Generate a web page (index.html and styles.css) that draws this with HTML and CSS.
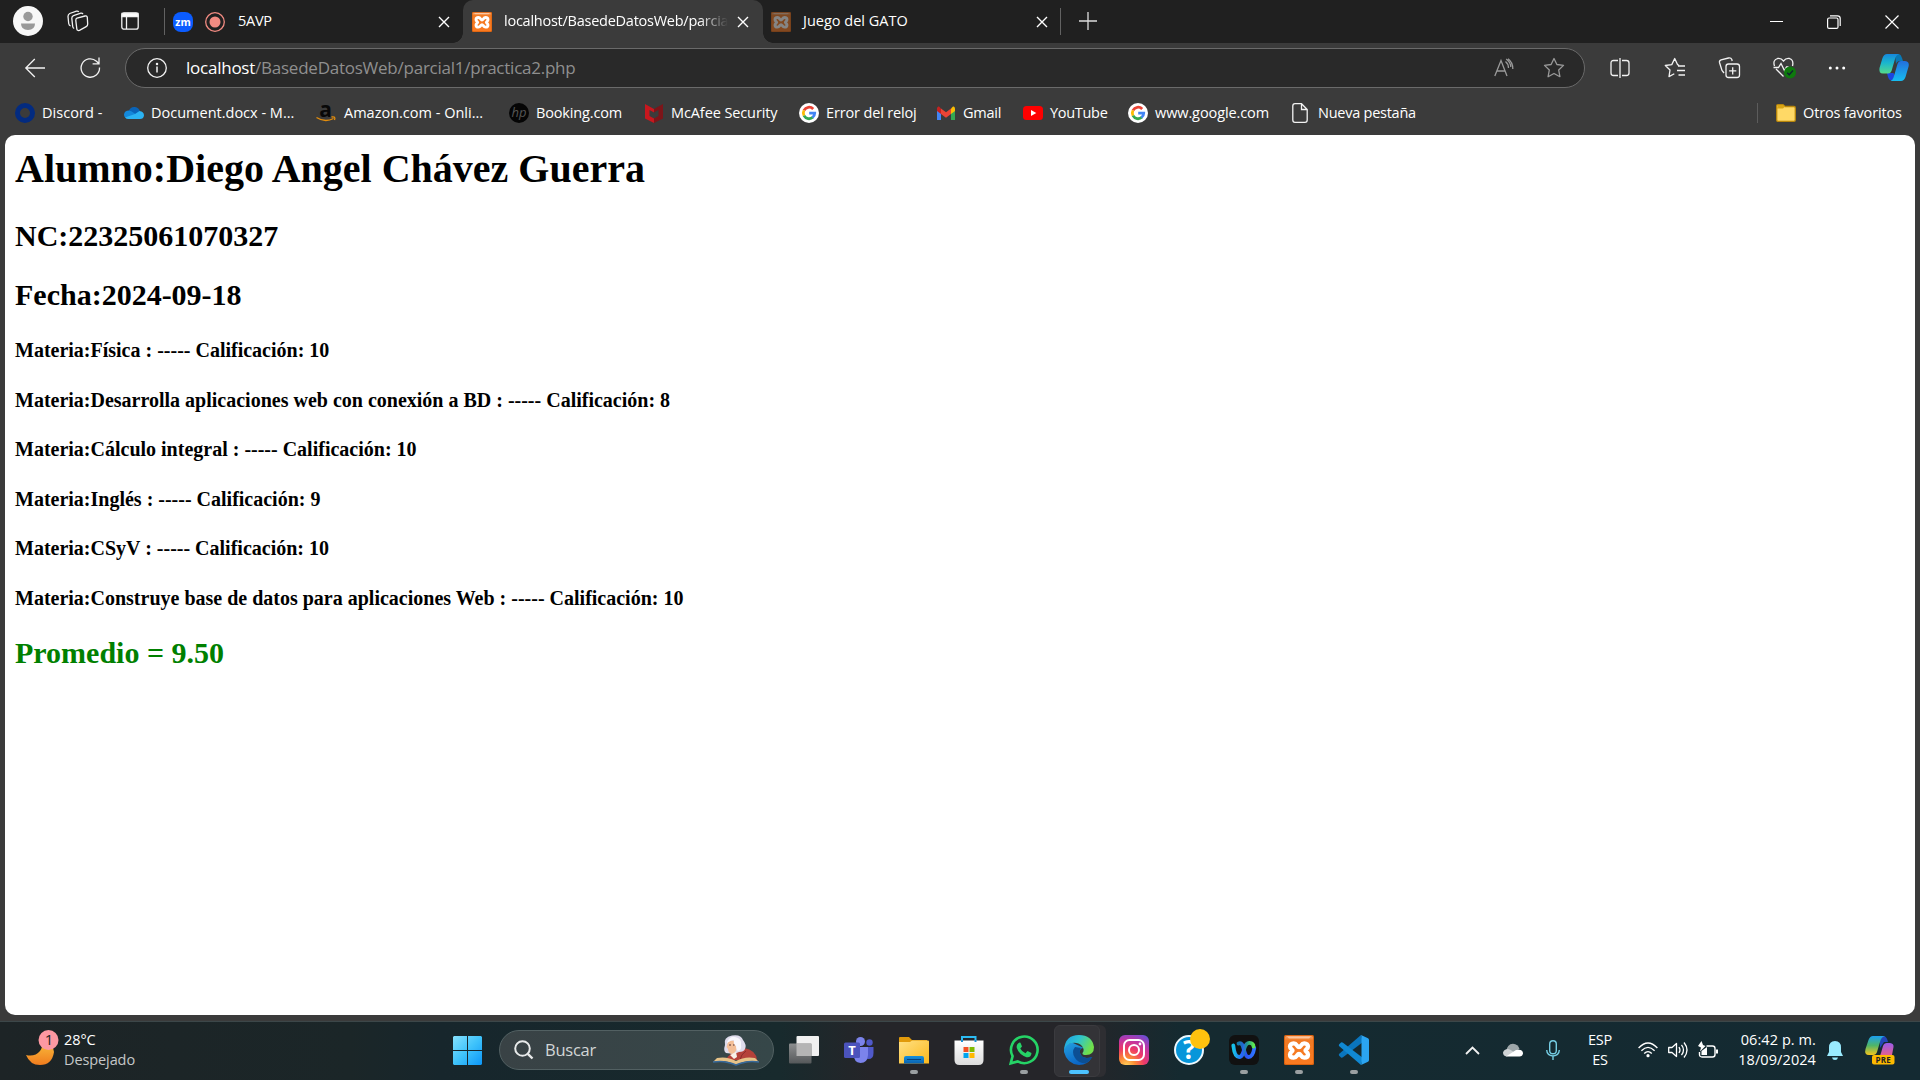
FILE: index.html
```html
<!DOCTYPE html>
<html lang="es">
<head>
<meta charset="utf-8">
<title>localhost/BasedeDatosWeb/parcial1/practica2.php</title>
<link rel="stylesheet" href="styles.css">
</head>
<body>
<svg class="defs" width="0" height="0" aria-hidden="true">
  <defs>
    <linearGradient id="cpA" x1="0" y1="0" x2="0" y2="1"><stop offset="0" stop-color="#1687dc"/><stop offset=".45" stop-color="#1ab6ce"/><stop offset="1" stop-color="#55d98a"/></linearGradient>
    <linearGradient id="cpB" x1="0" y1="0" x2="0" y2="1"><stop offset="0" stop-color="#236fdd"/><stop offset="1" stop-color="#16bdf0"/></linearGradient>
    <linearGradient id="cpC" x1="0" y1="0" x2="0" y2="1"><stop offset="0" stop-color="#1ba0f0"/><stop offset=".5" stop-color="#4fb568"/><stop offset="1" stop-color="#f5c51c"/></linearGradient>
    <linearGradient id="cpD" x1="0" y1="0" x2="0" y2="1"><stop offset="0" stop-color="#9a5bea"/><stop offset="1" stop-color="#f2607c"/></linearGradient>
    <linearGradient id="xg" x1="0" y1="0" x2="0" y2="1"><stop offset="0" stop-color="#f9a367"/><stop offset=".15" stop-color="#f17a24"/><stop offset="1" stop-color="#fb7a20"/></linearGradient>
    <linearGradient id="win" x1="0" y1="0" x2="1" y2="1"><stop offset="0" stop-color="#86e1fd"/><stop offset=".5" stop-color="#3fc3fb"/><stop offset="1" stop-color="#0c96f7"/></linearGradient>
    <linearGradient id="fold" x1="0" y1="0" x2="1" y2="1"><stop offset="0" stop-color="#ffe084"/><stop offset="1" stop-color="#fbb91d"/></linearGradient>
    <linearGradient id="blue" x1="0" y1="0" x2="0" y2="1"><stop offset="0" stop-color="#1590dc"/><stop offset="1" stop-color="#0a62b0"/></linearGradient>
    <linearGradient id="edgeTop" x1="0" y1="0" x2="1" y2=".4"><stop offset="0" stop-color="#1d9fe8"/><stop offset=".5" stop-color="#2ec4d0"/><stop offset="1" stop-color="#70e04b"/></linearGradient>
    <linearGradient id="edgeBody" x1="0" y1="0" x2=".5" y2="1"><stop offset="0" stop-color="#239fe0"/><stop offset="1" stop-color="#0a63c4"/></linearGradient>
    <radialGradient id="ig" cx=".25" cy="1.05" r="1.2"><stop offset="0" stop-color="#ffd860"/><stop offset=".25" stop-color="#fb8b34"/><stop offset=".5" stop-color="#ee3a67"/><stop offset=".75" stop-color="#bf35a5"/><stop offset="1" stop-color="#6a4fd4"/></radialGradient>
    <linearGradient id="wbA" x1="0" y1="0" x2="1" y2="0"><stop offset="0" stop-color="#16c3e8"/><stop offset=".45" stop-color="#2a62fa"/><stop offset=".65" stop-color="#1f8f95"/><stop offset="1" stop-color="#5de850"/></linearGradient>
    <linearGradient id="wbB" x1="0" y1="0" x2="1" y2="0"><stop offset="0" stop-color="#1478a8"/><stop offset=".5" stop-color="#2a55f5"/><stop offset="1" stop-color="#2f74ff"/></linearGradient>
    <linearGradient id="moon" x1="0" y1="0" x2="0" y2="1"><stop offset="0" stop-color="#f9bd3c"/><stop offset="1" stop-color="#f07c1e"/></linearGradient>
    <linearGradient id="store" x1="0" y1="0" x2="0" y2="1"><stop offset="0" stop-color="#fff"/><stop offset="1" stop-color="#dcdcdc"/></linearGradient>
    <linearGradient id="grey" x1="0" y1="0" x2="0" y2="1"><stop offset="0" stop-color="#8d8f90"/><stop offset="1" stop-color="#55585a"/></linearGradient>
    <symbol id="xampp" viewBox="0 0 30 30"><rect width="30" height="30" rx="1.500" fill="#d9620f"/><rect x="1" y="1" width="28" height="28" rx="1.500" fill="url(#xg)"/><path d="M3 1.500H27L25 3.500H5Z" fill="#fff" opacity=".45"/><path d="M15 12.200C13 12.200 13 8.300 9.700 8.300C7.300 8.300 6 9.800 6 11.600C6 14 8.500 14.500 8.500 15.500C8.500 16.500 6 17 6 19.400C6 21.500 7.500 22.700 9.700 22.700C13 22.700 13 19 15 19C17 19 17 22.700 20.300 22.700C22.500 22.700 24 21.500 24 19.400C24 17 21.500 16.500 21.500 15.500C21.500 14.500 24 14 24 11.600C24 9.800 22.700 8.300 20.300 8.300C17 8.300 17 12.200 15 12.200Z" fill="none" stroke="#fff" stroke-width="4.300" stroke-linejoin="round"/></symbol>
    <symbol id="x" viewBox="0 0 12 12"><path d="M1 1L11 11M11 1L1 11" stroke="#fff" stroke-width="1.400" fill="none"/></symbol>
    <symbol id="google" viewBox="0 0 20 20"><circle cx="10" cy="10" r="10" fill="#fff"/><g fill="none" stroke-width="2.800"><path d="M5 7.300A5.700 5.700 0 0 1 14.200 6" stroke="#ea4335"/><path d="M5 12.700A5.700 5.700 0 0 1 5 7.300" stroke="#fbbc05"/><path d="M13.800 14.300A5.700 5.700 0 0 1 5 12.700" stroke="#34a853"/><path d="M10.200 10.200H15.700A5.700 5.700 0 0 1 13.500 14.500" stroke="#4285f4"/></g></symbol>
  </defs>
</svg>

<header class="tabs">
  <div class="tabs-tools">
    <svg width="30" height="30" viewBox="0 0 30 30"><circle cx="15" cy="15" r="15" fill="#f7f7f7"/><circle cx="15" cy="10.500" r="4.700" fill="#999"/><path d="M8 17.500H22Q22 24 15 24Q8 24 8 17.500Z" fill="#999"/></svg>
    <svg class="line workspaces" width="22" height="22" viewBox="0 0 22 22"><path d="M10 8.200L18 6Q20 5.500 20.300 7.400L20.700 14Q20.700 15.800 19.200 16.600L12.500 20.400Q10.200 21 9.800 18.800L8.800 10.500Q8.700 8.700 10 8.200Z"/><path d="M7.200 18.500Q5.900 18 5.700 16.500L4.800 8.200Q4.800 6.300 6.500 5.600L13.800 3.200Q15.200 2.900 16 4"/><path d="M3.600 16Q2 15.400 1.700 13.500L1 6.500Q1 4.300 2.700 3.500L9.500 1.200Q11 .8 11.800 1.800"/></svg>
    <svg class="line pane" width="18" height="18" viewBox="0 0 18 18"><rect x=".8" y=".8" width="16.400" height="16.400" rx="2.300"/><path d="M1 1.500H17V4.500H1Z" fill="#fff"/><path d="M5.500 5V17"/></svg>
  </div>
  <div class="tab tab-first">
    <svg width="20" height="20" viewBox="0 0 20 20"><rect width="20" height="20" rx="8" fill="#0b5cff"/><text x="10" y="13.500" text-anchor="middle" class="zm">zm</text></svg>
    <svg class="rec" width="20" height="20" viewBox="0 0 20 20"><circle cx="10" cy="10" r="9.300" fill="none" stroke="#f28b82" stroke-width="1.300"/><circle cx="10" cy="10" r="5.500" fill="#f28b82"/></svg>
    <span class="tab-title">5AVP</span>
    <svg class="close" width="12" height="12"><use href="#x"/></svg>
  </div>
  <div class="tab tab-active">
    <svg width="20" height="20"><use href="#xampp"/></svg>
    <span class="tab-title fade">localhost/BasedeDatosWeb/parcia</span>
    <svg class="close" width="12" height="12"><use href="#x"/></svg>
  </div>
  <div class="tab tab-last">
    <svg class="asleep" width="20" height="20"><use href="#xampp"/></svg>
    <span class="tab-title">Juego del GATO</span>
    <svg class="close" width="12" height="12"><use href="#x"/></svg>
  </div>
  <svg class="new-tab" width="18" height="18" viewBox="0 0 18 18"><path d="M9 0V18M0 9H18" stroke="#ddd" stroke-width="1.300"/></svg>
  <div class="window-buttons">
    <svg width="13" height="13" viewBox="0 0 13 13"><path d="M0 6.500H13" stroke="#fff"/></svg>
    <svg width="14" height="14" viewBox="0 0 14 14" fill="none" stroke="#fff" stroke-width="1.200"><rect x=".6" y="3" width="10.400" height="10.400" rx="1.500"/><path d="M3 .8H10.500Q13.200 .8 13.200 3.500V11"/></svg>
    <svg width="14" height="14" viewBox="0 0 14 14"><path d="M.5 .5L13.500 13.500M13.500 .5L.5 13.500" stroke="#fff" stroke-width="1.200"/></svg>
  </div>
</header>

<nav class="toolbar">
  <svg class="line back" width="20" height="20" viewBox="0 0 20 20"><path d="M20 10H1M9.800 1L.8 10L9.800 19"/></svg>
  <svg class="line reload" width="21" height="21" viewBox="0 0 21 21"><path d="M19.500 10.500A9.200 9.200 0 1 1 16.500 4.200L18.800 6.500M19 .5V6.800H12.600"/></svg>
  <div class="address">
    <svg class="line info" width="20" height="20" viewBox="0 0 20 20"><circle cx="10" cy="10" r="9.300"/><path d="M10 8.500V14.500" stroke-width="1.500"/><circle cx="10" cy="5.900" r=".6" fill="#fff"/></svg>
    <span class="url"><b>localhost</b>/BasedeDatosWeb/parcial1/practica2.php</span>
    <svg class="line dim" width="20" height="20" viewBox="0 0 20 20"><path d="M.8 18L7 2.500L13 18M2.800 13H11M11.500 3.500Q14.500 6 14.500 10M14 .8Q19 4.500 18.800 11M12.200 1Q16.800 4.500 16.800 9"/></svg>
    <svg class="line dim" width="22" height="22" viewBox="0 0 22 22"><path d="M11 1.500L13.900 7.500L20.500 8.400L15.700 13L16.900 19.700L11 16.500L5.100 19.700L6.300 13L1.500 8.400L8.100 7.500Z" stroke-linejoin="round"/></svg>
  </div>
  <div class="toolbar-icons">
    <svg class="line" width="20" height="20" viewBox="0 0 20 20"><path d="M8 2.500H3.500Q1 2.500 1 5V15Q1 17.500 3.500 17.500H8M12 2.500H16.500Q19 2.500 19 5V15Q19 17.500 16.500 17.500H12M10 0V20"/></svg>
    <svg class="line" width="21" height="21" viewBox="0 0 21 21"><path d="M14.500 8.300L13 7.600L10.200 1.500L7.300 7.600L.8 8.500L5.500 13L4.500 19.600L9.800 16.700M13.500 9H20.500M12.500 13.500H20.500M14 18H20.500" stroke-linejoin="round"/></svg>
    <svg class="line" width="22" height="22" viewBox="0 0 22 22"><path d="M5.500 16L3.500 13.500L1 5.500Q.6 3.500 2.600 2.800L10 1Q12.500 .5 13.300 2.500L13.700 4"/><rect x="7.500" y="7" width="13.500" height="13.500" rx="2.500"/><path d="M14.200 10.200V17.400M10.600 13.800H17.800"/></svg>
    <svg class="line" width="24" height="22" viewBox="0 0 24 22"><path d="M2 9Q0 3 5 1.500Q8.500 .8 11 4Q13.500 .8 17 1.500Q21.500 3 20 9M3.500 12L11 19.500M1 10.500H6L8.500 6.500L12 13.500L14 10H16"/><circle cx="17.500" cy="15.500" r="6" fill="#0e7a0d" stroke="none"/><path d="M14.700 15.700L16.700 17.700L20.500 13.500" stroke="#123" stroke-width="1.400"/></svg>
    <svg width="18" height="4" viewBox="0 0 18 4" fill="#fff"><circle cx="2.300" cy="2" r="1.500"/><circle cx="9" cy="2" r="1.500"/><circle cx="15.700" cy="2" r="1.500"/></svg>
    <svg width="30" height="27" viewBox="0 0 30 27"><path d="M16 0H20Q22 .5 23 4L24 7H21Q18 7 17 10Z" fill="#0878b5"/><path d="M8 19H14.500L16 22L13 26.500Q10 26.500 9 23Z" fill="#1b46df"/><path d="M8 0H20Q17 1 16 5L12.500 17Q11.500 19.500 9 19.500H4Q-.5 19.500 .5 14L3.500 4Q5 0 8 0Z" fill="url(#cpA)"/><path d="M22 27H11.500Q14 26 15 22L18.500 10Q19.500 7 22 7H26Q30.500 7.500 29.700 12L26.500 23Q25 27 22 27Z" fill="url(#cpB)"/></svg>
  </div>
</nav>

<nav class="favorites">
  <a class="fav f1"><svg width="20" height="20" viewBox="0 0 20 20"><circle cx="10" cy="10" r="7.500" fill="none" stroke="#032b80" stroke-width="5"/></svg><span>Discord -</span></a>
  <a class="fav f2"><svg width="20" height="20" viewBox="0 0 20 20"><path d="M4.500 9Q6 3.500 11 4Q15 4.500 16 8.500L10 13Z" fill="#0a64b8"/><path d="M4.500 15.500Q0 15.500 0 11.500Q.5 7.500 5 7.500Q7 7.500 10 10L17 15Z" fill="#1488da"/><path d="M11 11L15.500 8Q20 8.500 20 12.500Q19.500 16 16 16H4.500Q2.500 16 1 14.500Z" fill="#2bb3f3"/></svg><span>Document.docx - M...</span></a>
  <a class="fav f3"><svg width="20" height="20" viewBox="0 0 20 20"><text x="9.500" y="13.500" text-anchor="middle" class="amazon">a</text><path d="M.5 14.500Q9 20 17.500 15.500M15.500 14Q20 13 18.500 17" fill="none" stroke="#e58e0c" stroke-width="1.300"/></svg><span>Amazon.com - Onli...</span></a>
  <a class="fav f4"><svg width="20" height="20" viewBox="0 0 20 20"><circle cx="10" cy="10" r="10" fill="#050505"/><text x="10" y="14" text-anchor="middle" class="hp">hp</text></svg><span>Booking.com</span></a>
  <a class="fav f5"><svg width="18" height="20" viewBox="0 0 18 20"><path d="M0 1L9 6V9.500L4.500 7V13L9 15.500V20L0 15.500Z" fill="#c8171e"/><path d="M18 1L9 6V9.500L13.500 7V13L9 15.500V20L18 15.500Z" fill="#7d1519"/></svg><span>McAfee Security</span></a>
  <a class="fav f6"><svg width="20" height="20"><use href="#google"/></svg><span>Error del reloj</span></a>
  <a class="fav f7"><svg width="18" height="14" viewBox="0 0 18 14"><path d="M0 2V14H4V6Z" fill="#4285f4"/><path d="M18 2V14H14V6Z" fill="#34a853"/><path d="M14 2.500L16 .6Q18 0 18 3V5L14 8Z" fill="#fbbc04"/><path d="M4 2.500L2 .6Q0 0 0 3V5L4 8Z" fill="#c5221f"/><path d="M4 2.500L9 6.300L14 2.500V8L9 11.700L4 8Z" fill="#ea4335"/></svg><span>Gmail</span></a>
  <a class="fav f8"><svg width="20" height="14" viewBox="0 0 20 14"><rect width="20" height="14" rx="3.500" fill="#f00"/><path d="M8 4L13.300 7L8 10Z" fill="#fff"/></svg><span>YouTube</span></a>
  <a class="fav f9"><svg width="20" height="20"><use href="#google"/></svg><span>www.google.com</span></a>
  <a class="fav f10"><svg class="line" width="16" height="20" viewBox="0 0 16 20"><path d="M9.500 .7H3Q.8 .7 .8 3V17Q.8 19.300 3 19.300H13Q15.200 19.300 15.200 17V6.500ZM9.500 .7V6.500H15"/></svg><span>Nueva pestaña</span></a>
  <a class="fav others"><svg width="20" height="18" viewBox="0 0 20 18"><path d="M.7 2Q.7 .7 2 .7H7L9 2.500H18Q19.300 2.500 19.300 4V16Q19.300 17.300 18 17.300H2Q.7 17.300 .7 16Z" fill="#ffd966" stroke="#b8860b" stroke-width="1.300"/><path d="M1 4.500H7L9 2.500L7 .9H2Z" fill="#d9a514"/></svg><span>Otros favoritos</span></a>
</nav>

<main class="page">
  <h1>Alumno:Diego Angel Chávez Guerra</h1>
  <h2>NC:22325061070327</h2>
  <h2>Fecha:2024-09-18</h2>
  <h4>Materia:Física : ----- Calificación: 10</h4>
  <h4>Materia:Desarrolla aplicaciones web con conexión a BD : ----- Calificación: 8</h4>
  <h4>Materia:Cálculo integral : ----- Calificación: 10</h4>
  <h4>Materia:Inglés : ----- Calificación: 9</h4>
  <h4>Materia:CSyV : ----- Calificación: 10</h4>
  <h4>Materia:Construye base de datos para aplicaciones Web : ----- Calificación: 10</h4>
  <h2 class="average">Promedio = 9.50</h2>
</main>

<footer class="taskbar">
  <div class="weather">
    <svg width="34" height="38" viewBox="0 0 34 38"><path d="M0 25Q9 27 14 21Q17 17 16 12Q28 14 28 22Q26 35 14 35Q4 35 0 25Z" fill="url(#moon)"/><circle cx="22.500" cy="10" r="10" fill="#fd98a2"/><text x="23" y="15" text-anchor="middle" class="count">1</text></svg>
    <div class="weather-text"><span>28°C</span><span class="muted">Despejado</span></div>
  </div>
  <svg class="start" width="29" height="29" viewBox="0 0 29 29"><path d="M1 0H14V14H0V1ZM15 0H28L29 1V14H15ZM0 15H14V29H1L0 28ZM15 15H29V28L28 29H15Z" fill="url(#win)"/></svg>
  <div class="search">
    <svg width="20" height="20" viewBox="0 0 20 20"><circle cx="8.500" cy="8.500" r="7.300" fill="none" stroke="#e8eaea" stroke-width="2"/><path d="M13.800 13.800L18.500 18.500" stroke="#e8eaea" stroke-width="2.400"/></svg>
    <span>Buscar</span>
    <svg class="writer" width="46" height="32" viewBox="0 0 46 32"><path d="M13 26Q16 19 23 18L31 14Q43 16 44 26Z" fill="#b5413a"/><path d="M27 26Q28 20 33 17" stroke="#8b2d2c" fill="none"/><path d="M13 19Q10 17 12 11Q10 3 19 1.500Q28 0 30 6Q34 11 32 15Q31 18 26 18L21 20Z" fill="#dfdcec"/><path d="M15 8Q19 5 23 8L24 14Q22 20 19 20Q15 19 15 15L13.500 13Z" fill="#f3bf98"/><path d="M14 8Q17 2 22 3Q29 4 28 11Q29 16 25 17Q23 16 23 12Q20 10 21 6Q18 6 14 9Z" fill="#f9f8fd"/><path d="M16 11H18M20 11H21.500" stroke="#533" stroke-width="1.200"/><path d="M17 21L23 18L24 23L21 25Z" fill="#f7f0e9"/><path d="M0 28Q12 25 23 31Q34 25 46 28L42 24Q32 22 23 27Q14 22 4 24Z" fill="#e7c388"/><path d="M0 28Q12 26 23 31Q34 26 46 28" fill="none" stroke="#386a9b" stroke-width="1.400"/></svg>
  </div>
  <div class="apps">
    <div class="app"><svg width="30" height="30" viewBox="0 0 30 30"><rect x="7.500" y="1" width="22.500" height="20" rx="1" fill="#f1f1f1"/><rect y="8.500" width="22.500" height="20" rx="1" fill="url(#grey)"/><path d="M7.500 8.500H22.500V21H7.500Z" fill="#b5b5b5"/></svg></div>
    <div class="app"><svg width="30" height="30" viewBox="0 0 30 30"><circle cx="25.500" cy="7.500" r="3.200" fill="#5059c9"/><path d="M20 12H29.500V18Q29.500 24 24.500 24Q20 24 20 19Z" fill="#5059c9"/><circle cx="16.500" cy="6.500" r="4.500" fill="#7b83eb"/><path d="M10 12H24V20Q23.500 28 16.500 28Q9.500 27 10 20Z" fill="#7b83eb"/><rect y="7.500" width="16" height="15.500" rx="1.500" fill="#4b53bc"/><text x="7.800" y="20" text-anchor="middle" class="teams">T</text></svg></div>
    <div class="app running"><svg width="30" height="30" viewBox="0 0 30 30"><path d="M0 3Q0 2 1 2H10L13 5H28V14H0Z" fill="#e19a0b"/><path d="M0 7H11L13 5.500H29Q30 5.500 30 6.500V28.500H0Z" fill="url(#fold)"/><path d="M5 28.500V23Q5 21 7 21H23Q25 21 25 23V28.500Z" fill="url(#blue)"/><path d="M8 24.500H22" stroke="#06427d"/></svg></div>
    <div class="app"><svg width="30" height="30" viewBox="0 0 30 30"><path d="M8 7V2H21.500V7" fill="none" stroke="#2cbcf3" stroke-width="2"/><path d="M.5 5.500H29.500V25Q29.500 30 24.500 30H5.500Q.5 30 .5 25Z" fill="url(#store)"/><path d="M8 7V5M21.500 7V5" stroke="#1a8fd0" stroke-width="2"/><path d="M9.500 12H14.500V17H9.500Z" fill="#f25022"/><path d="M15.500 12H20.500V17H15.500Z" fill="#7fba00"/><path d="M9.500 18H14.500V23H9.500Z" fill="#00a4ef"/><path d="M15.500 18H20.500V23H15.500Z" fill="#ffb900"/></svg></div>
    <div class="app running"><svg width="30" height="30" viewBox="0 0 30 30"><path d="M1.700 28.300L3.600 21.200A13.300 13.300 0 1 1 8.700 26.400Z" fill="none" stroke="#25d366" stroke-width="2.600"/><path d="M10.500 7.500Q7 9 7.800 13Q10 19.500 17.500 22.200Q22 23 22.500 18L18.500 16L16.500 18.200Q13 17 11.300 13.500L13 11.500L11.500 7.800Z" fill="#25d366"/></svg></div>
    <div class="app current"><svg width="30" height="30" viewBox="0 0 30 30"><path d="M0 15Q1 7 9 8L20 13Q15 13 16 18Q18 25 28 22Q24 30 15 30Q3 29 0 17Z" fill="url(#edgeBody)"/><path d="M11 12Q7 17 11 23Q15 29 22 28Q26 26 28.500 22Q18 25 16 18Q15 15 17 13Z" fill="#0c4f94"/><path d="M0 15Q1 0 15 0Q28 0 30 12Q30 20 22 20Q18 20 18.500 18Q21 15 18 11Q14 7 8 8Q2 9 0 15Z" fill="url(#edgeTop)"/></svg></div>
    <div class="app"><svg width="30" height="30" viewBox="0 0 30 30"><rect width="30" height="30" rx="6" fill="url(#ig)"/><g fill="none" stroke="#fff" stroke-width="2"><rect x="5" y="5" width="20" height="20" rx="5.500"/><circle cx="15" cy="15" r="5"/></g><circle cx="21" cy="9" r="1.400" fill="#fff"/></svg></div>
    <div class="app help"><svg width="30" height="30" viewBox="0 0 30 30"><circle cx="15" cy="15" r="14" fill="#0796da" stroke="#eef8fd" stroke-width="2"/><text x="15" y="24" text-anchor="middle" class="question">?</text></svg></div>
    <div class="app running"><svg width="30" height="30" viewBox="0 0 30 30"><rect width="30" height="30" rx="6" fill="#111"/><g fill="none" stroke-width="3.800" stroke-linecap="round"><path d="M9.500 8.500C13.500 7 14 12 15 15C16.500 21 18 22 19.500 22C22.500 22 24.500 18 25.300 13" stroke="url(#wbB)"/><path d="M4.300 10.500C5 17 7 22 10.200 22C13.500 22 14.500 17 15.500 13C17 8 19 7.700 20.500 7.800C23 8 24.500 9.500 24.500 11.500" stroke="url(#wbA)"/></g></svg></div>
    <div class="app running"><svg width="30" height="30"><use href="#xampp"/></svg></div>
    <div class="app running"><svg width="30" height="30" viewBox="0 0 30 30"><path d="M22 0L0 19Q-.5 20 .2 20.800L2 22.500Q3 23 4 22.300L24 7Z" fill="#0a75bd"/><path d="M22 30L0 11Q-.5 10 .2 9.200L2 7.500Q3 7 4 7.700L24 23Z" fill="#1088d2"/><path d="M22 0L29 3.300Q30 4 30 5V25Q30 26 29 26.700L22 30Q22.500 29.500 22.500 28V2Q22.500 .5 22 0Z" fill="#2ba5f2"/></svg></div>
  </div>
  <div class="tray">
    <svg class="line chevron" width="15" height="9" viewBox="0 0 15 9"><path d="M1 8L7.500 1.500L14 8" stroke-width="1.800"/></svg>
    <svg class="cloud" width="20" height="14" viewBox="0 0 20 14"><path d="M3 9Q4 1 10 .8Q15 1 16.500 6L10 10Z" fill="#9da6a9"/><path d="M3.500 13.500Q0 13 0 9.500Q1 6 5 6Q7 6 10 8.500L12 10Z" fill="#cfd3d5"/><path d="M3 13.500L13 7Q20 5.500 20 10.500Q19.500 13.500 16.500 13.500Z" fill="#fff"/></svg>
    <svg class="mic" width="14" height="20" viewBox="0 0 14 20" fill="none" stroke="#75cde3" stroke-width="1.400"><rect x="3.700" y=".7" width="6.600" height="13" rx="3.300"/><path d="M.7 10Q1 15.500 7 16Q13 15.500 13.300 10M7 16V20"/></svg>
    <div class="lang"><span>ESP</span><span>ES</span></div>
    <svg class="wifi" width="20" height="16" viewBox="0 0 20 16" fill="none" stroke="#fff" stroke-width="1.400"><path d="M.6 6Q10-4 19.400 6M3.400 8.800Q10 2 16.600 8.800M6.200 11.500Q10 7.700 13.800 11.500"/><circle cx="10" cy="13.700" r="1.600" fill="#fff" stroke="none"/></svg>
    <svg class="volume" width="20" height="18" viewBox="0 0 20 18" fill="none" stroke="#fff" stroke-width="1.300"><path d="M.7 6.500H4L8.500 2.500V15.500L4 11.500H.7ZM11 6Q13 9 11 12M13.500 3.800Q17.500 9 13.500 14.200M16 1.500Q22 9 16 16.500" stroke-linejoin="round"/></svg>
    <svg class="battery" width="20" height="18" viewBox="0 0 20 18"><path d="M8.500 5H14.500Q17 5 17 7.500V13.500Q17 16 14.500 16H4Q1.500 16 1.500 13.500V11" fill="none" stroke="#fff" stroke-width="1.400"/><path d="M18 8.500H20V12.500H18Z" fill="#fff"/><path d="M3.500 10L9 6V14H3.500Z" fill="#fff"/><path d="M3.500 0L5 4L7.500 5L2 10.500L3 6.500L0 5Z" fill="#fff"/></svg>
    <div class="clock"><span>06:42 p. m.</span><span>18/09/2024</span></div>
    <svg class="bell" width="16" height="19" viewBox="0 0 16 19" fill="#99ebff"><path d="M8 0Q14 0 14 6.500V11L16 15H0L2 11V6.500Q2 0 8 0ZM5 16.500H11Q10.500 19 8 19Q5.500 19 5 16.500Z"/></svg>
    <svg class="copilot" width="30" height="29" viewBox="0 0 30 29"><path d="M15 0H19Q22 1 23 6H19L15 12Z" fill="#2346b8"/><path d="M8 0H20Q16 1 15 6L12 16Q11 19 8 19H4Q-1 19 .5 13L3.500 4Q5 0 8 0Z" fill="url(#cpC)"/><path d="M20 22H12Q15 21 16 17L18 10Q19 7 22 7H25Q29 7.500 28.500 11L27 19Z" fill="url(#cpD)"/><rect x="7" y="19" width="22.500" height="9.500" rx="2" fill="#fdb900"/><text x="18.300" y="26.700" text-anchor="middle" class="pre">PRE</text></svg>
  </div>
</footer>
</body>
</html>
```
FILE: styles.css
```css
* { box-sizing: border-box; }
body {
  margin: 0;
  width: 1920px;
  height: 1080px;
  overflow: hidden;
  display: flex;
  flex-direction: column;
  background: #3b3b3b;
  color: #fff;
  font: 14.5px/20px "Open Sans", "Noto Sans", sans-serif;
  letter-spacing: -.25px;
}
svg { display: block; flex: none; overflow: visible; }
.defs { position: absolute; }
span { white-space: nowrap; }
.line { fill: none; stroke: #f2f2f2; stroke-width: 1.3; }
.dim { stroke: #9a9a9a; }

/* Tab strip */
.tabs { height: 43px; flex: none; display: flex; background: #202020; }
.tabs-tools { width: 164px; display: flex; align-items: center; padding: 0 0 1px 13px; }
.workspaces { margin-left: 24px; }
.pane { margin-left: 32px; }
.tab { display: flex; align-items: center; padding-top: 1px; }
.tab .close { margin-left: auto; }
.tab-title { margin-top: -2px; }
.tab-first {
  width: 299px;
  padding: 1px 13px 0 8px;
  border-left: 1px solid;
  border-image: linear-gradient(transparent 9px, #626262 9px 34px, transparent 34px) 1;
}
.rec { margin: 0 13px 0 12px; }
.tab-active { position: relative; width: 300px; background: #3b3b3b; border-radius: 10px 10px 0 0; padding: 1px 14px 0 9px; }
.tab-active::before, .tab-active::after { content: ""; position: absolute; bottom: 0; width: 10px; height: 10px; }
.tab-active::before { left: -10px; background: radial-gradient(circle at 0 0, #202020 9.5px, #3b3b3b 10px); }
.tab-active::after { right: -10px; background: radial-gradient(circle at 100% 0, #202020 9.5px, #3b3b3b 10px); }
.fade { width: 224px; -webkit-mask-image: linear-gradient(90deg, #000 195px, transparent 224px); mask-image: linear-gradient(90deg, #000 195px, transparent 224px); }
.tab-active .tab-title, .tab-last .tab-title { margin-left: 12px; }
.tab-last {
  width: 298px;
  padding: 1px 12px 0 8px;
  letter-spacing: 0;
  border-right: 1px solid;
  border-image: linear-gradient(transparent 9px, #626262 9px 34px, transparent 34px) 1;
}
.asleep { opacity: .45; }
.new-tab { margin: 12px 0 0 18px; }
.window-buttons { margin-left: auto; display: flex; align-items: center; gap: 44px; padding-right: 21px; }
.zm { font: bold 10.5px "Open Sans", sans-serif; fill: #fff; letter-spacing: 0; }

/* Address row */
.toolbar { height: 49px; flex: none; display: flex; align-items: center; padding-left: 25px; }
.reload { margin-left: 35px; }
.address {
  width: 1460px;
  height: 40px;
  margin: 1px 0 0 24px;
  display: flex;
  align-items: center;
  gap: 29px;
  padding: 0 19px 0 21px;
  background: #292929;
  border: 1px solid #6a6a6a;
  border-radius: 20px;
}
.url { margin: -1px auto 0 -10px; font-size: 17px; color: #8f8f8f; letter-spacing: -.24px; }
.url b { color: #fff; font-weight: normal; }
.toolbar-icons { flex: 1; display: flex; align-items: center; justify-content: space-between; padding: 0 11px 0 25px; }
.toolbar-icons svg:nth-child(n+2):nth-child(-n+4) { transform: translateX(1.5px); }

/* Favorites row */
.favorites { height: 43px; flex: none; display: flex; align-items: center; padding: 0 18px 2px 15px; }
.fav { display: flex; align-items: center; gap: 8px; }
.f1 { width: 109px; gap: 7px; letter-spacing: .05px; }
.f2 { width: 192px; gap: 7px; letter-spacing: 0; }
.f3 { width: 193px; letter-spacing: 0; }
.f4 { width: 136px; gap: 7px; letter-spacing: -.15px; }
.f5 { width: 154px; letter-spacing: -.1px; }
.f6 { width: 138px; gap: 7px; letter-spacing: -.15px; }
.f7 { width: 86px; }
.f8 { width: 105px; gap: 7px; letter-spacing: -.3px; }
.f9 { width: 164px; gap: 7px; letter-spacing: -.1px; }
.f10 { gap: 10px; letter-spacing: -.25px; }
.others { margin-left: auto; width: 145px; padding-left: 18px; gap: 7px; letter-spacing: -.15px; border-left: 1px solid #5c5c5c; }
.amazon { font: bold 21px "Open Sans", sans-serif; fill: #080808; letter-spacing: 0; }
.hp { font: italic 13px "Open Sans", sans-serif; fill: #555; letter-spacing: 0; }

/* Web page */
.page { height: 880px; margin: 0 5px; padding: 10px; flex: none; background: #fff; color: #000; border-radius: 10px; font-family: "Liberation Serif", "Times New Roman", serif; line-height: normal; letter-spacing: 0; }
.page h1 { font-size: 40px; margin: 0 0 26.8px; }
.page h2 { font-size: 30px; margin: 24.9px 0; }
.page h4 { font-size: 20px; margin: 26.6px 0; }
.page h2 + h4 { margin-top: 27.4px; }
.page h4:last-of-type { margin-bottom: 25.8px; }
.page .average { color: #008000; }

/* Taskbar */
.taskbar {
  height: 59px;
  margin-top: 6px;
  flex: none;
  display: flex;
  align-items: center;
  padding-bottom: 2px;
  border-top: 1px solid #3c4749;
  background: linear-gradient(90deg, #1d2426 0, #1b2628 350px, #17262c 440px, #182a2d 780px, #252529 870px, #252529 1080px, #152a30 1180px, #142a32 100%);
}
.weather { width: 453px; display: flex; padding: 0 0 1px 26px; }
.weather-text { display: flex; flex-direction: column; margin-left: 4px; letter-spacing: -.1px; }
.muted { color: #c4c7c8; }
.count { font: 15px "Open Sans", sans-serif; fill: #222; }
.search {
  width: 275px;
  height: 40px;
  margin-left: 17px;
  display: flex;
  align-items: center;
  padding: 0 14px 0 14px;
  border: 1px solid #526062;
  border-radius: 20px;
  background: linear-gradient(90deg, #394245, #364749);
}
.search span { margin-left: 11px; font-size: 16.5px; color: #d2d6d6; }
.writer { margin-left: auto; }
.apps { display: flex; margin-left: 2px; }
.app { position: relative; width: 55px; height: 50px; display: flex; align-items: center; justify-content: center; }
.app svg { position: relative; }
.running::after, .current::after { content: ""; position: absolute; left: 24px; bottom: 1px; width: 8px; height: 4px; border-radius: 2px; background: #9a9fa1; }
.current::after { left: 18px; width: 20px; background: #4cc2ff; }
.current::before { content: ""; position: absolute; left: 3px; top: 0; width: 44px; height: 50px; border-radius: 6px; background: #333337; border: 1px solid #3b3b3f; box-shadow: 6px 0 0 #2e2e32; }
.help::after { content: ""; position: absolute; left: 29px; top: 4px; width: 20px; height: 20px; border-radius: 50%; background: #ffc20e; }
.teams { font: bold 13px "Open Sans", sans-serif; fill: #fff; }
.question { font: bold 26px "Open Sans", sans-serif; fill: #fff; }
.pre { font: bold 8px "Open Sans", sans-serif; fill: #222; letter-spacing: .3px; }
.tray { flex: 1; display: flex; align-items: center; padding-right: 25px; }
.chevron { margin-left: 84px; }
.cloud { margin-left: 23px; }
.mic { margin-left: 23px; }
.lang { width: 40px; margin-left: 20px; display: flex; flex-direction: column; align-items: center; }
.wifi { margin-left: 18px; }
.volume { margin-left: 10px; }
.battery { margin-left: 10px; }
.clock { width: 98px; display: flex; flex-direction: column; align-items: flex-end; letter-spacing: .08px; }
.bell { margin-left: 11px; }
.copilot { margin-left: auto; }
```
